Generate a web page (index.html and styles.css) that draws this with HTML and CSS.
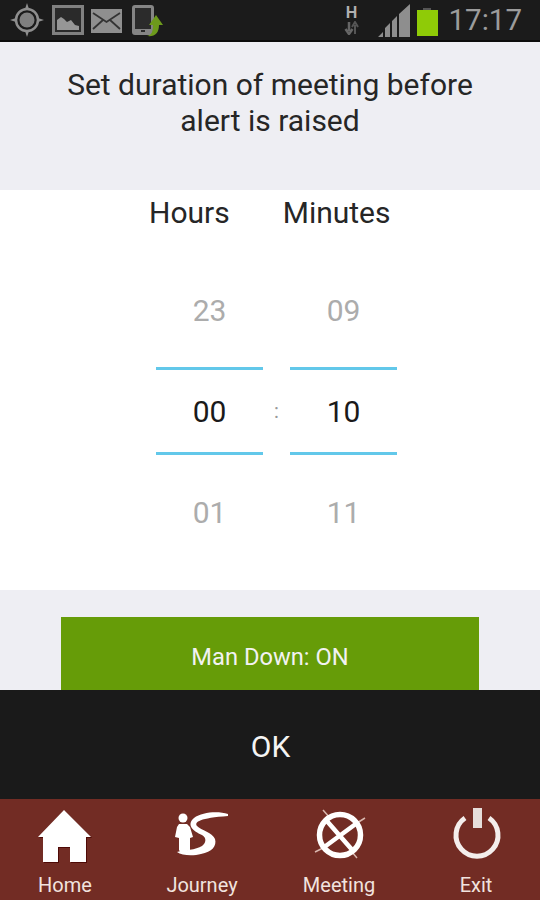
FILE: index.html
```html
<!DOCTYPE html>
<html lang="en">
<head>
<meta charset="utf-8">
<title>Meeting duration</title>
<link rel="stylesheet" href="styles.css">
</head>
<body>
<div class="phone">
  <div class="status">
    <div class="status-left">
      <svg class="ic" width="36" height="36" viewBox="0 0 36 36"><circle cx="18" cy="18" r="11" fill="none" stroke="#8e8e8e" stroke-width="2.5"/><circle cx="18" cy="18" r="7.5" fill="#808080"/><path d="M18 1l-2 6h4zM18 35l-2-6h4zM1 18l6-2v4zM35 18l-6-2v4z" fill="#8e8e8e"/></svg>
      <svg class="ic" width="32" height="30" viewBox="0 0 32 30"><rect x="1.5" y="1.5" width="29" height="27" fill="#2a2a2a" stroke="#808080" stroke-width="3"/><path d="M5 25V15l4-3 3 2 3 3 4-2 4 5 4 1v4z" fill="#969696"/></svg>
      <svg class="ic ic-mail" width="31" height="24" viewBox="0 0 31 24"><rect width="31" height="24" fill="#8f8f8f"/><path d="M2 4l13.500 9L29 4M2 20l10-9M29 20l-10-9" fill="none" stroke="#333" stroke-width="1.800"/></svg>
      <svg class="ic ic-phone" width="33" height="32" viewBox="0 0 33 32"><rect x="1.500" y="1.500" width="19" height="27" rx="1.500" fill="#2b2b2b" stroke="#858585" stroke-width="3"/><rect x="3" y="24" width="16" height="4" fill="#858585"/><rect x="9" y="25" width="4" height="2" fill="#2b2b2b"/><path d="M15 31c5-1 6-5 6-11h-4l7-10 7 10h-4c0 8-4 12-12 11z" fill="#6d9a1c"/></svg>
    </div>
    <div class="status-right">
      <div class="net"><span class="net-h">H</span><svg width="16" height="14" viewBox="0 0 16 14"><path d="M5 1v9M1.500 8l3.500 5 3.500-5" fill="none" stroke="#666" stroke-width="2.500"/><path d="M11 13V4M8 6l3-5 3 5" fill="none" stroke="#555" stroke-width="2"/></svg></div>
      <svg class="signal" width="33" height="33" viewBox="0 0 33 33"><path d="M0 33l5-5v5zM7 33v-9l5-5v14zM14 33V17l5-5v21zM21 33V10l11-10v33z" fill="#8e8e8e"/></svg>
      <div class="battery"></div>
      <span class="clock">17:17</span>
    </div>
  </div>

  <header class="title"><h1>Set duration of meeting before<br>alert is raised</h1></header>

  <section class="picker">
    <div class="picker-heads"><span>Hours</span><span>Minutes</span></div>
    <div class="wheels">
      <div class="wheel">
        <div class="cell dim">23</div>
        <div class="cell now">00</div>
        <div class="cell dim">01</div>
      </div>
      <div class="colon">:</div>
      <div class="wheel">
        <div class="cell dim">09</div>
        <div class="cell now">10</div>
        <div class="cell dim">11</div>
      </div>
    </div>
  </section>

  <section class="action"><button class="mandown">Man Down: ON</button></section>

  <button class="ok">OK</button>

  <nav class="nav">
    <a class="nav-item">
      <svg width="56" height="58" viewBox="0 0 56 58"><path d="M27 4L1 31h5v25h15V41h12v15h16V31h5z" fill="#4e0a06" transform="translate(1 1)"/><path d="M27 4L1 31h5v25h15V41h12v15h16V31h5z" fill="#fff"/></svg>
      <span>Home</span>
    </a>
    <a class="nav-item">
      <svg width="56" height="58" viewBox="0 0 56 58"><circle cx="9" cy="12" r="4.500" fill="#fff"/><path d="M5 18h8l3 3 3 10-3 1v12h-2l-2 3H7l-2-3V32l-4-1 2-10z" fill="#fff"/><path d="M54 8C44 5 28 6 20 12 12 19 19 25 28 29c5 3 4 8 0 11-6 4-18 4-25 6 5 4 17 4 24 2 11-2 16-8 14-15-2-6-14-9-18-13-3-4 3-8 31-10z" fill="#fff"/></svg>
      <span>Journey</span>
    </a>
    <a class="nav-item">
      <svg width="56" height="58" viewBox="0 0 56 58"><path d="M12 4l7 8M54 12l-8 5M4 46l8-4M46 52l-5-6" stroke="#d9b7ae" stroke-width="1.500"/><circle cx="29" cy="29" r="20.500" fill="none" stroke="#fff" stroke-width="5.500"/><path d="M15 14l28 32M46 17L12 42" stroke="#fff" stroke-width="4.500"/></svg>
      <span>Meeting</span>
    </a>
    <a class="nav-item">
      <svg width="56" height="58" viewBox="0 0 56 58"><path d="M17 12a21 21 0 1 0 24 0" fill="none" stroke="#f4eeec" stroke-width="5"/><rect x="25" y="2" width="9" height="20" fill="#e6dedb"/></svg>
      <span>Exit</span>
    </a>
  </nav>
</div>
</body>
</html>
```
FILE: styles.css
```css
* { box-sizing: border-box; }
html, body { margin: 0; padding: 0; }
body { width: 540px; height: 900px; overflow: hidden; font-family: Roboto, "Liberation Sans", sans-serif; background: #eeeef3; }
.phone { width: 540px; height: 900px; display: flex; flex-direction: column; }

.status { height: 42px; background: #1b1b1b; border-bottom: 2px solid #0c0c0c; display: flex; justify-content: space-between; align-items: center; padding: 0 18px 0 9px; flex: none; }
.status-left { display: flex; align-items: center; gap: 7px; }
.ic-mail { margin-top: 2px; }
.ic-phone { margin-left: 3px; margin-top: 2px; }
.status-right { display: flex; align-items: center; }
.net { width: 18px; display: flex; flex-direction: column; align-items: center; margin-right: 17px; color: #b0b0b0; }
.net-h { font: bold 16px/16px "Liberation Sans", sans-serif; }
.signal { margin-right: 6px; margin-top: 1px; }
.battery { width: 21px; height: 26px; background: #8fcb07; position: relative; margin-top: 6px; margin-right: 11px; }
.battery::before { content: ""; position: absolute; left: 6px; top: -2px; width: 8px; height: 2px; background: #555; }
.clock { font-size: 29.500px; line-height: 36px; color: #9c9c9c; }

.title { height: 148px; flex: none; padding-top: 25px; text-align: center; }
.title h1 { margin: 0; font-size: 30px; line-height: 36px; font-weight: 400; color: #262626; }

.picker { height: 400px; flex: none; background: #fff; padding-top: 6px; }
.picker-heads { display: flex; font-size: 30px; line-height: 34px; font-weight: 400; color: #262626; padding-left: 149px; gap: 53px; }
.wheels { display: flex; padding-left: 156px; margin-top: 30px; }
.wheel { width: 107px; display: flex; flex-direction: column; }
.colon { width: 27px; text-align: center; color: #999; font-size: 20px; padding-top: 136px; line-height: 30px; }
.cell { height: 101px; display: flex; align-items: center; justify-content: center; font-size: 30px; font-weight: 400; }
.dim { color: #acacac; }
.now { color: #1a1a1a; border-top: 3px solid #62c8ea; border-bottom: 3px solid #62c8ea; height: 88px; margin: 6px 0 7px; }

.action { height: 100px; flex: none; padding: 27px 61px 0; }
.mandown { width: 100%; height: 73px; border: 0; background: #669c08; color: #f2f2f2; font: 400 23.700px Roboto, sans-serif; padding: 6px 0 0; }

.ok { height: 109px; flex: none; border: 0; background: #1a1a1a; color: #f4f4f4; font: 400 30px Roboto, sans-serif; padding: 3px 0 0 1px; }

.nav { height: 101px; flex: none; background: #722c24; display: grid; grid-template-columns: repeat(4, 130px); column-gap: 7px; }
.nav-item { display: flex; flex-direction: column; align-items: center; color: #f1e3df; font-size: 20px; line-height: 24px; padding-top: 7px; }
.nav-item svg { display: block; margin-bottom: 9px; }
```
